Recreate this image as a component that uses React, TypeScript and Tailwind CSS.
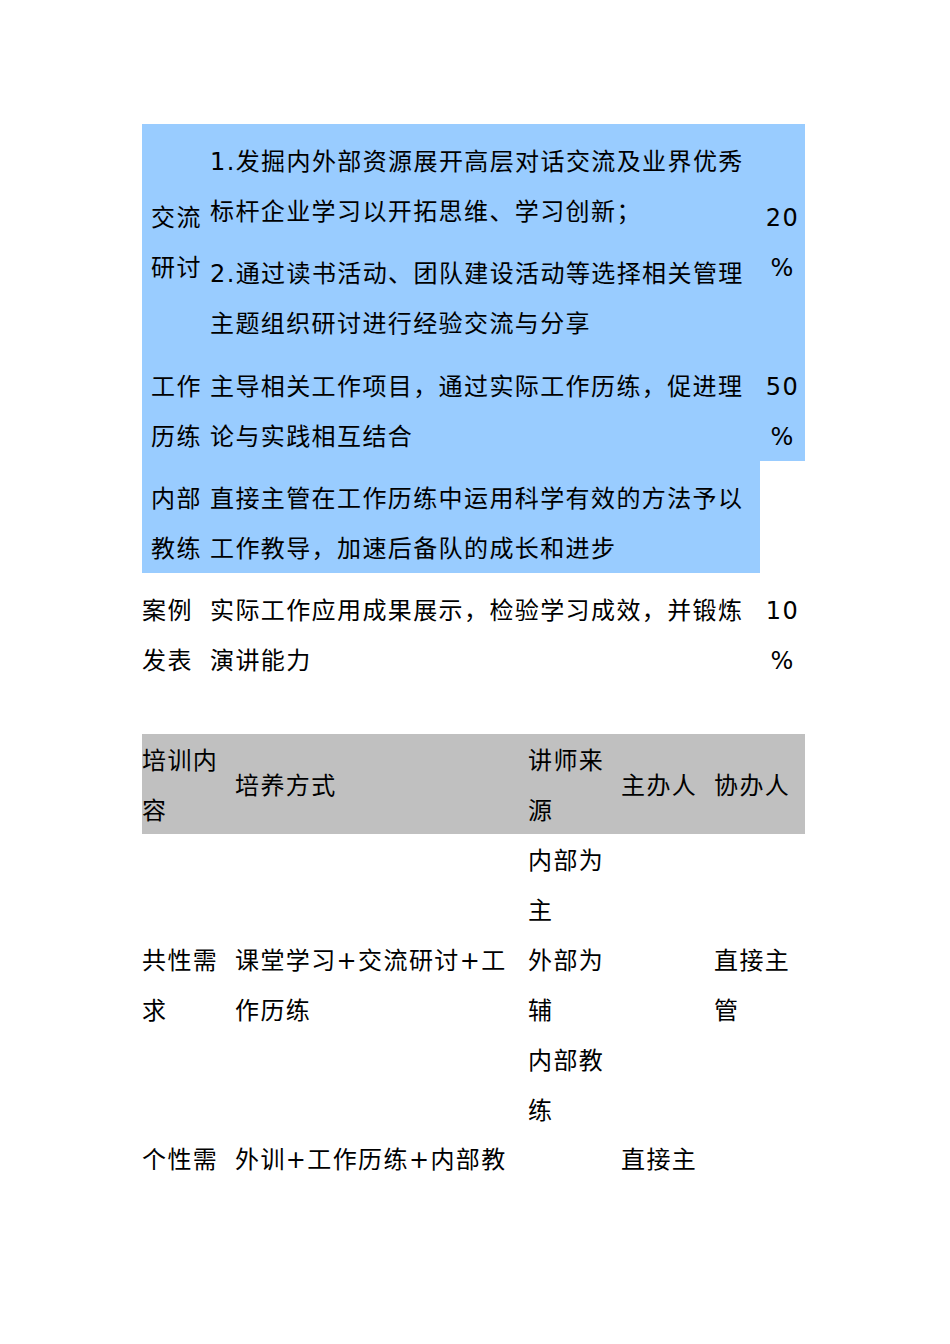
const blueRows = [
  {
    label: ['交流', '研讨'],
    paras: [
      ['1.发掘内外部资源展开高层对话交流及业界优秀', '标杆企业学习以开拓思维、学习创新；'],
      ['2.通过读书活动、团队建设活动等选择相关管理', '主题组织研讨进行经验交流与分享'],
    ],
    pct: '20',
    pctBlue: true,
    pctCenter: true,
    h: 'h-[225px]',
  },
  {
    label: ['工作', '历练'],
    paras: [['主导相关工作项目，通过实际工作历练，促进理', '论与实践相互结合']],
    pct: '50',
    pctBlue: true,
    pctCenter: false,
    h: 'h-[112px]',
  },
  {
    label: ['内部', '教练'],
    paras: [['直接主管在工作历练中运用科学有效的方法予以', '工作教导，加速后备队的成长和进步']],
    pct: '',
    pctBlue: false,
    pctCenter: false,
    h: 'h-[112px]',
  },
]

function Lines({ lines }: { lines: string[] }) {
  return (
    <>
      {lines.map((l, i) => (
        <div key={i} className="whitespace-nowrap">
          {l}
        </div>
      ))}
    </>
  )
}

export default function App() {
  return (
    <div className="min-h-[1344px] bg-white text-black font-['DejaVu_Sans','Noto_Sans_CJK_SC',sans-serif] text-[24px] leading-[50px] tracking-[1.4px]">
      <div className="ml-[142px] w-[663px] pt-[124px]">
        {/* 第一张表 */}
        <div>
          {blueRows.map((row, i) => (
            <div key={i} className={`grid grid-cols-[68px_550px_45px] overflow-hidden ${row.h}`}>
              <div className="bg-[#99ccff] pt-[13px] pl-[9px] flex flex-col justify-center">
                <Lines lines={row.label} />
              </div>
              <div className="bg-[#99ccff] pt-[13px] flex flex-col gap-3">
                {row.paras.map((p, j) => (
                  <div key={j}>
                    <Lines lines={p} />
                  </div>
                ))}
              </div>
              <div
                className={`pt-[13px] flex flex-col items-center ${row.pctBlue ? 'bg-[#99ccff]' : ''} ${
                  row.pctCenter ? 'justify-center' : ''
                }`}
              >
                {row.pct && (
                  <>
                    <div>{row.pct}</div>
                    <div>%</div>
                  </>
                )}
              </div>
            </div>
          ))}
          <div className="grid grid-cols-[68px_550px_45px] h-[112px] overflow-hidden">
            <div className="pt-[13px]">
              <Lines lines={['案例', '发表']} />
            </div>
            <div className="pt-[13px]">
              <Lines lines={['实际工作应用成果展示，检验学习成效，并锻炼', '演讲能力']} />
            </div>
            <div className="pt-[13px] flex flex-col items-center">
              <div>10</div>
              <div>%</div>
            </div>
          </div>
        </div>

        {/* 第二张表 */}
        <div className="mt-[49px]">
          <div className="grid grid-cols-[93px_293px_93px_93px_91px] bg-[#c0c0c0] h-[100px] overflow-hidden">
            <div className="pt-[2px] flex flex-col justify-center">
              <Lines lines={['培训内', '容']} />
            </div>
            <div className="pt-[2px] flex flex-col justify-center">培养方式</div>
            <div className="pt-[2px] flex flex-col justify-center">
              <Lines lines={['讲师来', '源']} />
            </div>
            <div className="pt-[2px] flex flex-col justify-center">主办人</div>
            <div className="pt-[2px] flex flex-col justify-center">协办人</div>
          </div>
          <div className="grid grid-cols-[93px_293px_93px_93px_91px] h-[300px] pt-[2px]">
            <div className="flex flex-col justify-center">
              <Lines lines={['共性需', '求']} />
            </div>
            <div className="flex flex-col justify-center">
              <Lines lines={['课堂学习+交流研讨+工', '作历练']} />
            </div>
            <div>
              <Lines lines={['内部为', '主', '外部为', '辅', '内部教', '练']} />
            </div>
            <div></div>
            <div className="flex flex-col justify-center">
              <Lines lines={['直接主', '管']} />
            </div>
          </div>
          <div className="grid grid-cols-[93px_293px_93px_93px_91px] pt-[1px]">
            <div>个性需</div>
            <div className="whitespace-nowrap">外训+工作历练+内部教</div>
            <div></div>
            <div>直接主</div>
            <div></div>
          </div>
        </div>
      </div>
    </div>
  )
}
